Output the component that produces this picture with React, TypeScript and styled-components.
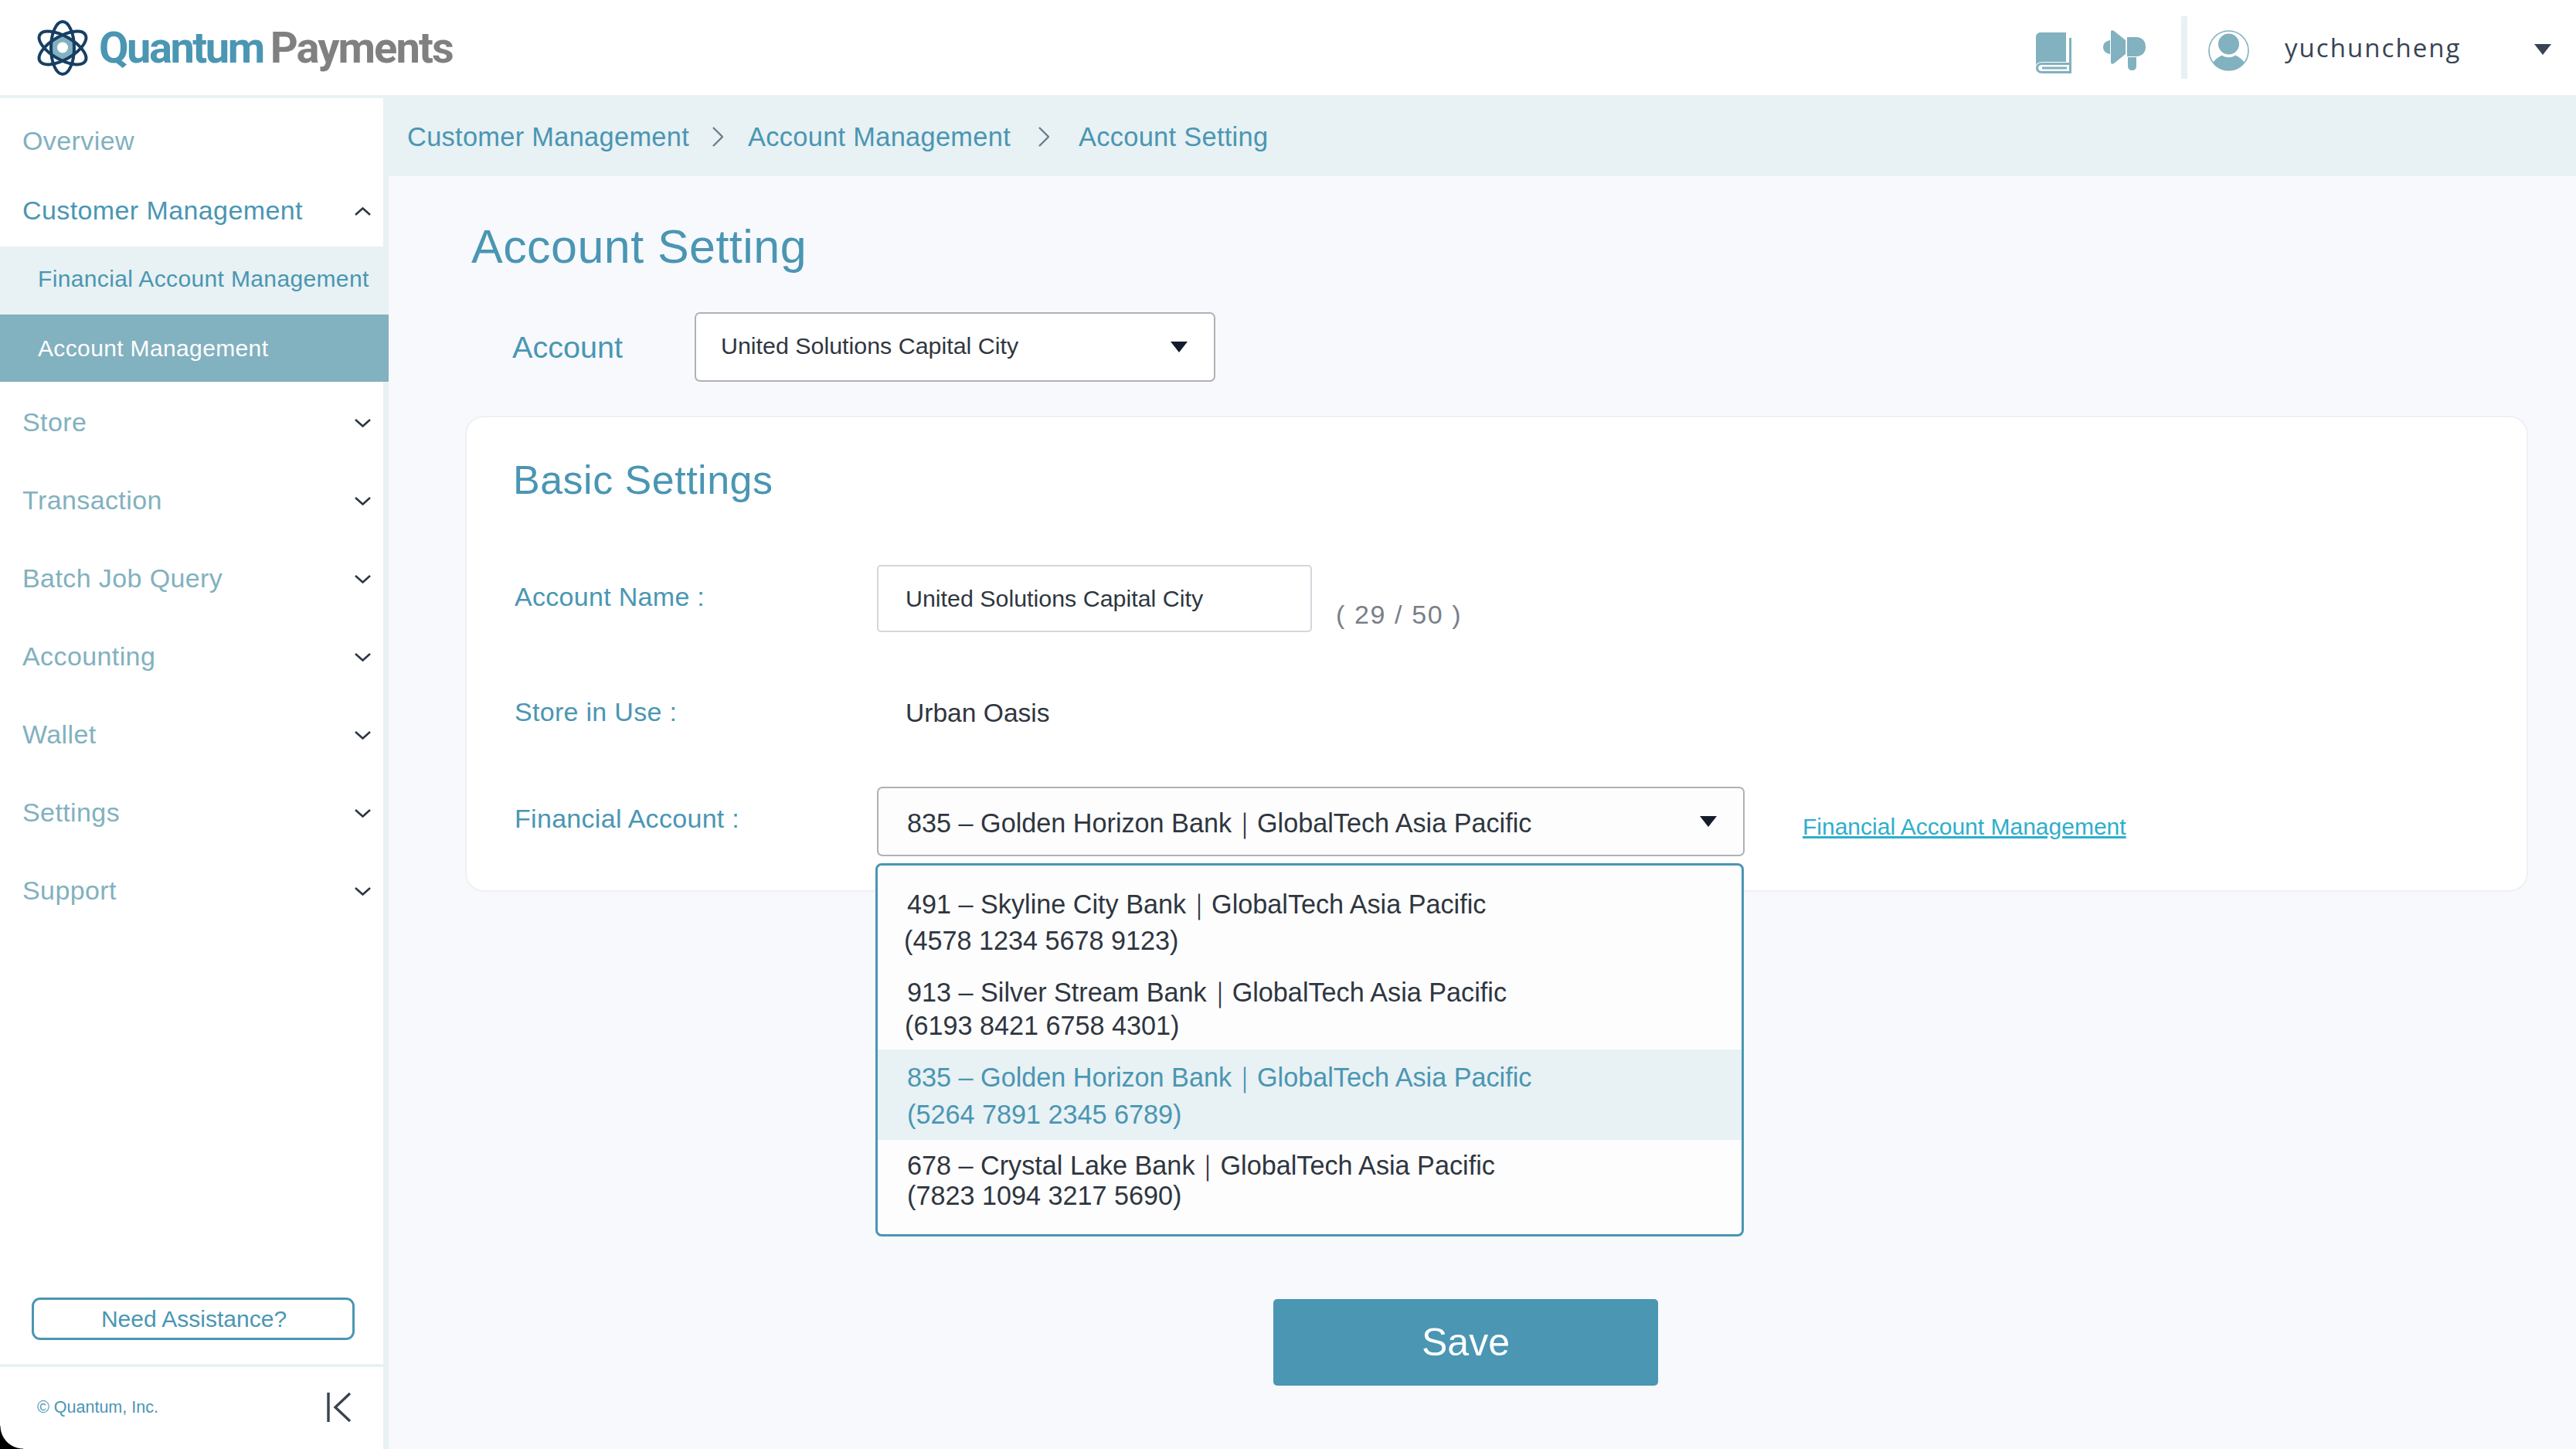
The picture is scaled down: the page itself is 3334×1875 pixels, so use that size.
import React from "react";
import styled, { createGlobalStyle } from "styled-components";

const TEAL = "#4a96b3";
const SOFT = "#82b1bf";
const PALE = "#e8f1f3";
const INK = "#2f3640";
const FONT = `"Liberation Sans", Arial, sans-serif`;

const Global = createGlobalStyle`
  html, body { margin: 0; padding: 0; background: #f7f9fd; }
  body { font-family: ${FONT}; }
  * { box-sizing: border-box; }
`;

const Page = styled.div`
  position: relative;
  width: 3334px;
  height: 1875px;
  overflow: hidden;
  display: flex;
  flex-direction: column;
  background: #f7f9fd;
`;

const Header = styled.header`
  height: 127px;
  flex: none;
  background: #fff;
  border-bottom: 4px solid ${PALE};
  display: flex;
  align-items: center;
  padding: 0 32px 0 47px;
`;

const LogoWrap = styled.div`
  display: flex;
  align-items: center;
  gap: 13px;
`;

const LogoText = styled.div`
  display: flex;
  gap: 9px;
  font-family: "Roboto", sans-serif;
  font-weight: 700;
  font-size: 56px;
  line-height: 1;
`;

const LogoWord = styled.span<{ $color: string; $tracking: number }>`
  color: ${(p) => p.$color};
  letter-spacing: ${(p) => p.$tracking}px;
`;

const HeaderRight = styled.div`
  margin-left: auto;
  display: flex;
  align-items: center;
`;

const BookIcon = styled.svg`
  width: 46px;
  height: 53px;
  fill: ${SOFT};
  margin-right: 41px;
  margin-top: 14px;
`;

const MegaIcon = styled.svg`
  width: 55px;
  height: 53px;
  fill: ${SOFT};
  margin-top: 8px;
`;

const VLine = styled.div`
  width: 8px;
  height: 81px;
  margin: 0 27px 0 46px;
  background: ${PALE};
`;

const AvatarIcon = styled.svg`
  width: 53px;
  height: 53px;
  margin: 8px 46px 0 0;
`;

const UserName = styled.span`
  font-family: "Open Sans", sans-serif;
  font-size: 33px;
  letter-spacing: 2.05px;
  color: #3a4353;
  width: 323px;
`;

const Caret = styled.span<{ $w: number; $h: number; $color?: string }>`
  display: block;
  flex: none;
  width: 0;
  height: 0;
  border-left: ${(p) => p.$w / 2}px solid transparent;
  border-right: ${(p) => p.$w / 2}px solid transparent;
  border-top: ${(p) => p.$h}px solid ${(p) => p.$color ?? "#141c2b"};
`;

const UserCaret = styled(Caret)`
  margin-top: 5px;
`;

const Body = styled.div`
  flex: 1;
  display: flex;
  min-height: 0;
`;

const Sidebar = styled.aside`
  width: 503px;
  flex: none;
  background: #fff;
  border-right: 7px solid ${PALE};
  display: flex;
  flex-direction: column;
  padding-top: 12px;
`;

const NavRow = styled.div<{ $h?: number; $soft?: boolean }>`
  height: ${(p) => p.$h ?? 101}px;
  flex: none;
  display: flex;
  align-items: center;
  justify-content: space-between;
  padding: 0 16px 0 29px;
  font-size: 34px;
  letter-spacing: 0.4px;
  color: ${(p) => (p.$soft ? SOFT : TEAL)};
`;

const SubRow = styled.div<{ $active?: boolean; $h: number }>`
  height: ${(p) => p.$h}px;
  flex: none;
  margin-right: -7px;
  display: flex;
  align-items: center;
  padding: ${(p) => (p.$active ? 1 : 0)}px 0 ${(p) => (p.$active ? 0 : 4)}px 49px;
  font-size: 30px;
  letter-spacing: 0.36px;
  color: ${(p) => (p.$active ? "#fff" : TEAL)};
  background: ${(p) => (p.$active ? SOFT : PALE)};
`;

const GroupList = styled.div`
  padding-top: 2px;
`;

const ChevronIcon = styled.svg<{ $up?: boolean }>`
  width: 21px;
  height: 11px;
  margin-top: 2px;
  fill: none;
  stroke: #2b3645;
  stroke-width: 2.6;
  transform: ${(p) => (p.$up ? "rotate(180deg)" : "none")};
`;

const SideBottom = styled.div`
  margin-top: auto;
  flex: none;
`;

const HelpButton = styled.button`
  display: block;
  width: 418px;
  height: 55px;
  margin: 0 0 31px 41px;
  background: #fff;
  border: 3px solid ${TEAL};
  border-radius: 11px;
  color: ${TEAL};
  font-family: ${FONT};
  font-size: 30px;
  padding: 0 0 0 2px;
`;

const SideFooter = styled.div`
  height: 110px;
  border-top: 4px solid ${PALE};
  display: flex;
  align-items: center;
  justify-content: space-between;
  padding: 0 41px 2px 48px;
  font-size: 21.5px;
  color: ${TEAL};
`;

const CollapseIcon = styled.svg`
  width: 32px;
  height: 38px;
  fill: none;
  stroke: #3a4353;
  stroke-width: 3.4;
`;

const Main = styled.main`
  flex: 1;
  min-width: 0;
  margin-left: -1px;
  display: flex;
  flex-direction: column;
`;

const Breadcrumb = styled.nav`
  height: 101px;
  flex: none;
  background: ${PALE};
  display: flex;
  align-items: center;
  padding: 0 0 1px 25px;
  font-size: 34.4px;
  color: ${TEAL};
  letter-spacing: 0.3px;
`;

const CrumbChevron = styled.svg<{ $after: number }>`
  width: 14px;
  height: 26px;
  margin: 0 ${(p) => p.$after}px 0 ${(p) => p.$after - 2}px;
  fill: none;
  stroke: #6d7f8a;
  stroke-width: 2.4;
`;

const Content = styled.div`
  flex: 1;
  padding: 0 62px 0 101px;
  display: flex;
  flex-direction: column;
`;

const Title = styled.h1`
  margin: 52px 0 0 7px;
  height: 80px;
  font-weight: 400;
  font-size: 61px;
  letter-spacing: 0.45px;
  line-height: 78px;
  color: ${TEAL};
`;

const AccountRow = styled.div`
  margin-top: 44px;
  display: flex;
  align-items: center;
`;

const AccountLabel = styled.label`
  width: 296px;
  padding-left: 60px;
  font-size: 39.6px;
  color: ${TEAL};
`;

const SelectText = styled.span<{ $lift: number }>`
  margin-top: ${(p) => p.$lift}px;
`;

const Select = styled.div<{ $w: number; $h: number; $pad: number; $size: number; $bg?: string }>`
  width: ${(p) => p.$w}px;
  height: ${(p) => p.$h}px;
  display: flex;
  align-items: center;
  justify-content: space-between;
  padding: 0 34px 0 ${(p) => p.$pad}px;
  background: ${(p) => p.$bg ?? "#fdfdfe"};
  border: 2px solid #aeb1b6;
  border-radius: 7px;
  color: ${INK};
  font-size: ${(p) => p.$size}px;
`;

const Card = styled.section`
  position: relative;
  margin-top: 44px;
  height: 616px;
  margin-left: -1px;
  background: #fff;
  border: 2px solid #eef0f5;
  border-radius: 24px;
  padding: 47px 0 0 60px;
`;

const CardTitle = styled.h2`
  margin: 0 0 74px;
  height: 70px;
  font-weight: 400;
  font-size: 52px;
  letter-spacing: 0.5px;
  line-height: 68px;
  color: ${TEAL};
`;

const FormRow = styled.div<{ $h: number; $mb: number }>`
  height: ${(p) => p.$h}px;
  margin-bottom: ${(p) => p.$mb}px;
  display: flex;
  align-items: center;
`;

const FieldLabel = styled.label<{ $lift?: number }>`
  width: 471px;
  flex: none;
  padding-left: 2px;
  padding-bottom: ${(p) => p.$lift ?? 4}px;
  font-size: 34px;
  letter-spacing: 0.3px;
  color: ${TEAL};
`;

const TextBox = styled.div`
  width: 563px;
  height: 87px;
  display: flex;
  align-items: center;
  padding-left: 35px;
  background: #fff;
  border: 2px solid #d4d6db;
  border-radius: 5px;
  font-size: 30.4px;
  color: ${INK};
`;

const Counter = styled.span`
  margin: 42px 0 0 31px;
  font-size: 34px;
  letter-spacing: 1.6px;
  color: #7a7f88;
`;

const Value = styled.span`
  padding-left: 37px;
  font-size: 33.6px;
  color: ${INK};
`;

const LinkText = styled.a`
  margin: 14px 0 0 75px;
  font-size: 30px;
  color: #2eaecb;
  text-decoration: underline;
`;

const Dropdown = styled.div`
  position: absolute;
  left: 529px;
  top: 577px;
  width: 1124px;
  height: 483px;
  padding-top: 20px;
  background: #fdfdfe;
  border: 3px solid ${TEAL};
  border-radius: 8px;
  z-index: 2;
`;

const Option = styled.div<{ $h: number; $active?: boolean }>`
  height: ${(p) => p.$h}px;
  padding-left: 38px;
  overflow: hidden;
  background: ${(p) => (p.$active ? PALE : "transparent")};
  color: ${(p) => (p.$active ? TEAL : INK)};
  font-size: 34.2px;
`;

const OptionLine = styled.div<{ $top: number; $left?: number }>`
  height: 46px;
  line-height: 46px;
  margin-top: ${(p) => p.$top}px;
  margin-left: ${(p) => p.$left ?? 0}px;
  white-space: nowrap;
`;

const SaveRow = styled.div`
  margin-top: 527px;
  display: flex;
  padding-left: 1045px;
`;

const SaveButton = styled.button`
  width: 498px;
  height: 112px;
  background: ${TEAL};
  border: none;
  border-radius: 5px;
  color: #fff;
  font-family: ${FONT};
  font-size: 50px;
`;

const WindowCorner = styled.div`
  position: absolute;
  left: 0;
  bottom: 0;
  width: 30px;
  height: 30px;
  background: radial-gradient(circle at 100% 0, transparent 29px, #000 30px);
`;

const Logo = () => (
  <svg width="68" height="72" viewBox="0 0 68 72" aria-hidden="true">
    <path d="M34 18 L48 26 V44 L34 53 L20 44 V26 Z" fill={SOFT} />
    <circle cx="34" cy="35.5" r="7" fill="#fff" />
    <g fill="none" stroke="#173f63" strokeWidth="4">
      <ellipse cx="34" cy="36" rx="15" ry="34" />
      <ellipse cx="34" cy="36" rx="15" ry="34" transform="rotate(60 34 36)" />
      <ellipse cx="34" cy="36" rx="15" ry="34" transform="rotate(120 34 36)" />
    </g>
  </svg>
);

const Chevron = ({ up }: { up?: boolean }) => (
  <ChevronIcon $up={up} viewBox="0 0 21 11">
    <path d="M1 1 L10.5 9.5 L20 1" />
  </ChevronIcon>
);

const CrumbSep = ({ after }: { after: number }) => (
  <CrumbChevron $after={after} viewBox="0 0 14 26">
    <path d="M1 1 L13 13 L1 25" />
  </CrumbChevron>
);

const groups = ["Store", "Transaction", "Batch Job Query", "Accounting", "Wallet", "Settings", "Support"];

const options = [
  { h: 110, a: "491 – Skyline City Bank｜GlobalTech Asia Pacific", b: "(4578 1234 5678 9123)", top: 7, gap: 1, left: -4 },
  { h: 108, a: "913 – Silver Stream Bank｜GlobalTech Asia Pacific", b: "(6193 8421 6758 4301)", top: 11, gap: -3, left: -3 },
  { h: 117, a: "835 – Golden Horizon Bank｜GlobalTech Asia Pacific", b: "(5264 7891 2345 6789)", top: 13, gap: 2, left: 0, active: true },
  { h: 112, a: "678 – Crystal Lake Bank｜GlobalTech Asia Pacific", b: "(7823 1094 3217 5690)", top: 10, gap: -7, left: 0 },
];

export default function App() {
  return (
    <Page>
      <Global />
      <Header>
        <LogoWrap>
          <Logo />
          <LogoText>
            <LogoWord $color={TEAL} $tracking={-2.5}>Quantum</LogoWord>
            <LogoWord $color="#808080" $tracking={-1.9}>Payments</LogoWord>
          </LogoText>
        </LogoWrap>
        <HeaderRight>
          <BookIcon viewBox="0 0 46 53">
            <path d="M6 0H39V38H8C5 38 2 39 0 42V6C0 2.5 2.5 0 6 0Z" />
            <path
              fillRule="evenodd"
              d="M43 7H46V53H8C3 53 0 50 0 46C0 42 3 39 8 39H43V7ZM8 42C5 42 3 43.5 3 46C3 48.5 5 50 8 50H43V42ZM8 44.5H40V47.5H8Z"
            />
          </BookIcon>
          <MegaIcon viewBox="0 0 55 53">
            <path d="M9 13C3.5 14 0 17 0 22C0 27 3.5 30 9 31Z" />
            <path d="M10 2C10 0 12 -0.5 14 1L29 13V31L14 43C12 44.5 10 44 10 41Z" />
            <path d="M31 9H43C50 9 55 14 55 22C55 29 50 34 43 34H31Z" />
            <path d="M32 35H43V46C43 50 41 52 37.5 52C34 52 32 50 32 46Z" />
          </MegaIcon>
          <VLine />
          <AvatarIcon viewBox="0 0 53 53">
            <circle cx="26.5" cy="26.5" r="25.5" fill="#fff" stroke={SOFT} strokeWidth="1.6" />
            <circle cx="26.5" cy="18" r="13.5" fill={SOFT} />
            <path d="M6 42C10 37 14 34 18 32.5C22 36 31 36 35 32.5C39 34 43 37 47 42C43 49 35 52 26.5 52C18 52 10 49 6 42Z" fill={SOFT} />
          </AvatarIcon>
          <UserName>yuchuncheng</UserName>
          <UserCaret $w={23} $h={14} $color="#3a4353" />
        </HeaderRight>
      </Header>
      <Body>
        <Sidebar>
          <NavRow $h={87} $soft>Overview</NavRow>
          <NavRow $h={93}>
            Customer Management
            <Chevron up />
          </NavRow>
          <SubRow $h={88}>Financial Account Management</SubRow>
          <SubRow $h={87} $active>Account Management</SubRow>
          <GroupList>
            {groups.map((g) => (
              <NavRow key={g} $soft>
                {g}
                <Chevron />
              </NavRow>
            ))}
          </GroupList>
          <SideBottom>
            <HelpButton>Need Assistance?</HelpButton>
            <SideFooter>
              <span>© Quantum, Inc.</span>
              <CollapseIcon viewBox="0 0 32 38">
                <path d="M2 0V38M30 1L11 19L30 37" />
              </CollapseIcon>
            </SideFooter>
          </SideBottom>
        </Sidebar>
        <Main>
          <Breadcrumb>
            <span>Customer Management</span>
            <CrumbSep after={32} />
            <span>Account Management</span>
            <CrumbSep after={38} />
            <span>Account Setting</span>
          </Breadcrumb>
          <Content>
            <Title>Account Setting</Title>
            <AccountRow>
              <AccountLabel>Account</AccountLabel>
              <Select $w={674} $h={90} $pad={32} $size={30.4} $bg="#fff">
                <SelectText $lift={-4}>United Solutions Capital City</SelectText>
                <Caret $w={22} $h={14} />
              </Select>
            </AccountRow>
            <Card>
              <CardTitle>Basic Settings</CardTitle>
              <FormRow $h={87} $mb={76}>
                <FieldLabel>Account Name :</FieldLabel>
                <TextBox>United Solutions Capital City</TextBox>
                <Counter>( 29 / 50 )</Counter>
              </FormRow>
              <FormRow $h={58} $mb={66}>
                <FieldLabel>Store in Use :</FieldLabel>
                <Value>Urban Oasis</Value>
              </FormRow>
              <FormRow $h={90} $mb={0}>
                <FieldLabel $lift={8}>Financial Account :</FieldLabel>
                <Select $w={1123} $h={90} $pad={37} $size={34.2}>
                  <SelectText $lift={5}>835 – Golden Horizon Bank｜GlobalTech Asia Pacific</SelectText>
                  <Caret $w={22} $h={14} />
                </Select>
                <LinkText href="#">Financial Account Management</LinkText>
              </FormRow>
              <Dropdown>
                {options.map((o) => (
                  <Option key={o.a} $h={o.h} $active={o.active}>
                    <OptionLine $top={o.top}>{o.a}</OptionLine>
                    <OptionLine $top={o.gap} $left={o.left}>{o.b}</OptionLine>
                  </Option>
                ))}
              </Dropdown>
            </Card>
            <SaveRow>
              <SaveButton>Save</SaveButton>
            </SaveRow>
          </Content>
        </Main>
      </Body>
      <WindowCorner />
    </Page>
  );
}
